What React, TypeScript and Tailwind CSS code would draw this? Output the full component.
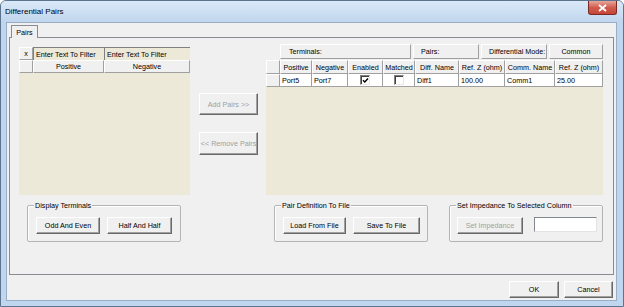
import type { ReactNode } from 'react';

const raised =
  'bg-[#f0f0f0] border border-t-white border-l-white border-r-[#a0a0a0] border-b-[#a0a0a0]';

function Btn({
  children,
  className = '',
  disabled = false,
}: {
  children: ReactNode;
  className?: string;
  disabled?: boolean;
}) {
  return (
    <div
      className={`flex items-center justify-center bg-[#f0f0f0] border border-t-white border-l-white border-r-[#696969] border-b-[#696969] shadow-[inset_-1px_-1px_0_#a0a0a0] ${
        disabled ? 'text-[#a0a0a0]' : 'text-black'
      } ${className}`}
    >
      {children}
    </div>
  );
}

function Check({ checked }: { checked: boolean }) {
  return (
    <div className="w-[10px] h-[10px] bg-white border border-t-[#808080] border-l-[#808080] border-r-[#e8e8e8] border-b-[#e8e8e8] shadow-[inset_1px_1px_0_#404040] flex items-center justify-center">
      {checked && (
        <svg width="7" height="7" viewBox="0 0 7 7">
          <path d="M1 3.2 L2.8 5 L6 1.5" stroke="#000" strokeWidth="1.4" fill="none" />
        </svg>
      )}
    </div>
  );
}

function GroupBox({
  label,
  className = '',
  children,
}: {
  label: string;
  className?: string;
  children: ReactNode;
}) {
  return (
    <div
      className={`relative h-[37px] border border-[#b4b4b4] rounded-[2px] shadow-[inset_1px_1px_0_#fff] ${className}`}
    >
      <span className="absolute left-[6px] top-[-5px] px-[1px] bg-[#f0f0f0] leading-[9px]">
        {label}
      </span>
      {children}
    </div>
  );
}

const columns = [
  { name: 'Positive', w: 'w-[32px]' },
  { name: 'Negative', w: 'w-[36px]' },
  { name: 'Enabled', w: 'w-[35px]' },
  { name: 'Matched', w: 'w-[32px]' },
  { name: 'Diff. Name', w: 'w-[44px]' },
  { name: 'Ref. Z (ohm)', w: 'w-[46px]' },
  { name: 'Comm. Name', w: 'w-[50px]' },
  { name: 'Ref. Z (ohm)', w: 'w-[48px]' },
];

const rowValues: (string | boolean)[] = ['Port5', 'Port7', true, false, 'Diff1', '100.00', 'Comm1', '25.00'];

export default function App() {
  return (
    <div className="relative w-[624px] h-[307px] flex flex-col bg-[#c0d6ee] border border-[#5b7591] rounded-t-[6px] font-['Liberation_Sans',Arial,sans-serif] text-[7.2px] leading-[9px] text-black overflow-hidden">
      {/* title bar */}
      <div className="h-[21px] flex items-center pl-[4px] bg-gradient-to-b from-[#dae9f8] to-[#c0d6ee] text-[8px]">
        Differential Pairs
      </div>
      <div className="absolute top-0 right-[6px] w-[29px] h-[14px] rounded-b-[3px] border border-t-0 border-[#7a2a22] bg-gradient-to-b from-[#e7a59b] via-[#cf5d50] to-[#c54536] flex items-center justify-center">
        <svg width="9" height="8" viewBox="0 0 9 8">
          <path d="M1 1 L8 7 M8 1 L1 7" stroke="#fff" strokeWidth="1.8" />
        </svg>
      </div>

      {/* client area */}
      <div className="ml-[5px] w-[611px] h-[279px] bg-[#f0f0f0] border border-[#98aec7] flex flex-col">
        <div className="h-[15px] flex items-end pl-[4px]">
          <div className="relative z-10 w-[27px] h-[13px] bg-[#f0f0f0] border border-b-0 border-[#898c95] flex items-center justify-center">
            Pairs
          </div>
        </div>

        {/* tab panel */}
        <div className="ml-[2px] mt-[-1px] w-[605px] h-[238px] border border-[#898c95] flex flex-col">
          <div className="flex items-start pl-[9px] pt-[6px]">
            {/* left grid */}
            <div className="mt-[3px] w-[171px] h-[148px] flex flex-col bg-[#ece9d8]">
              <div className="h-[13px] flex">
                <div className={`w-[14px] ${raised} flex items-center justify-center`}>x</div>
                <div className="w-[71px] border-l border-t border-[#808080] pl-[2px] flex items-center">
                  Enter Text To Filter
                </div>
                <div className="w-[86px] border-l border-t border-[#808080] pl-[2px] flex items-center">
                  Enter Text To Filter
                </div>
              </div>
              <div className="h-[13px] flex">
                <div className={`w-[14px] ${raised}`} />
                <div className={`w-[71px] ${raised} flex items-center justify-center`}>Positive</div>
                <div className={`w-[86px] ${raised} flex items-center justify-center`}>Negative</div>
              </div>
            </div>

            {/* middle buttons */}
            <div className="ml-[9px] mt-[49px] w-[59px] flex flex-col">
              <Btn disabled className="h-[22px]">
                Add Pairs &gt;&gt;
              </Btn>
              <Btn disabled className="mt-[17px] h-[23px]">
                &lt;&lt; Remove Pairs
              </Btn>
            </div>

            {/* right grid */}
            <div className="ml-[8px] w-[337px] h-[151px] flex flex-col">
              <div className="h-[15px] mb-[1px] flex">
                <div className="w-[14px]" />
                <div className={`w-[131px] ${raised} pl-[8px] flex items-center`}>Terminals:</div>
                <div className={`ml-[2px] w-[66px] ${raised} pl-[7px] flex items-center`}>Pairs:</div>
                <div className={`ml-[2px] w-[66px] ${raised} pl-[7px] flex items-center`}>Differential Mode:</div>
                <div className={`ml-[2px] w-[54px] ${raised} flex items-center justify-center`}>Common</div>
              </div>
              <div className="h-[14px] flex">
                <div className={`w-[14px] ${raised}`} />
                {columns.map((c, i) => (
                  <div key={i} className={`${c.w} ${raised} flex items-center justify-center whitespace-nowrap`}>
                    {c.name}
                  </div>
                ))}
              </div>
              <div className="h-[13px] flex">
                <div className={`w-[14px] ${raised}`} />
                {columns.map((c, i) => {
                  const v = rowValues[i];
                  return (
                    <div
                      key={i}
                      className={`${c.w} bg-white border-r border-b border-[#a0a0a0] flex items-center ${
                        typeof v === 'boolean' ? 'justify-center' : 'pl-[2px]'
                      }`}
                    >
                      {typeof v === 'boolean' ? <Check checked={v} /> : v}
                    </div>
                  );
                })}
              </div>
              <div className="flex-1 bg-[#ece9d8]" />
            </div>
          </div>

          {/* group boxes */}
          <div className="mt-[10px] flex pl-[17px]">
            <GroupBox label="Display Terminals" className="w-[154px]">
              <div className="flex pt-[11px] pl-[8px]">
                <Btn className="w-[64px] h-[17px]">Odd And Even</Btn>
                <Btn className="ml-[7px] w-[65px] h-[17px]">Half And Half</Btn>
              </div>
            </GroupBox>
            <GroupBox label="Pair Definition To File" className="ml-[93px] w-[154px]">
              <div className="flex pt-[11px] pl-[8px]">
                <Btn className="w-[63px] h-[17px]">Load From File</Btn>
                <Btn className="ml-[7px] w-[67px] h-[17px]">Save To File</Btn>
              </div>
            </GroupBox>
            <GroupBox label="Set Impedance To Selected Column" className="ml-[21px] w-[154px]">
              <div className="flex pt-[11px] pl-[7px]">
                <Btn disabled className="w-[66px] h-[17px]">
                  Set Impedance
                </Btn>
                <div className="ml-[11px] w-[63px] h-[15px] bg-white border border-t-[#828790] border-l-[#828790] border-r-[#e3e3e3] border-b-[#e3e3e3]" />
              </div>
            </GroupBox>
          </div>
        </div>

        {/* dialog buttons */}
        <div className="mt-[6px] mr-[3px] flex justify-end">
          <Btn className="w-[50px] h-[17px]">OK</Btn>
          <Btn className="ml-[5px] w-[49px] h-[17px]">Cancel</Btn>
        </div>
      </div>
    </div>
  );
}
